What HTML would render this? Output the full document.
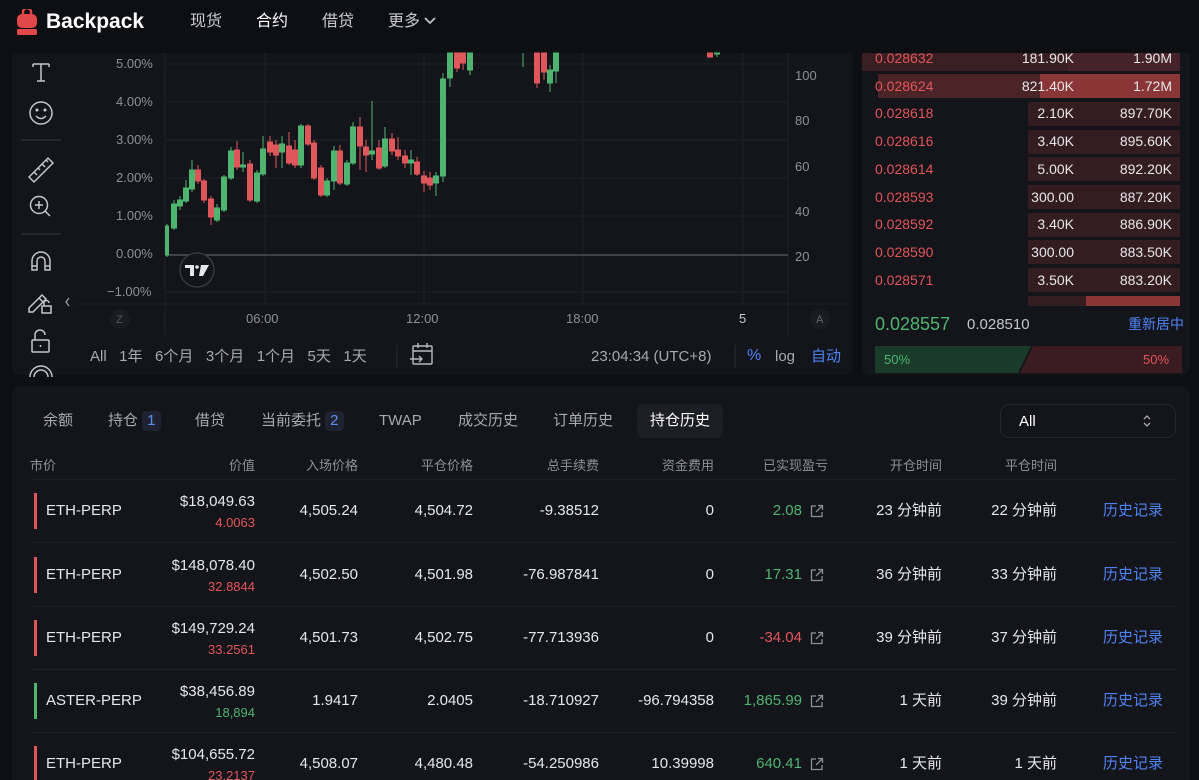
<!DOCTYPE html>
<html><head><meta charset="utf-8"><style>
*{margin:0;padding:0;box-sizing:border-box}
html,body{width:1199px;height:780px;overflow:hidden}
body{background:#0e0f13;position:relative;font-family:"Liberation Sans","Noto Sans CJK SC",sans-serif;color:#e6e7ea;line-height:1.2}
.a{position:absolute;white-space:nowrap}
.panel{position:absolute;background:#14151b;border-radius:8px}
.nav{font-size:16px;color:#c9cace;top:12px;line-height:20px}
.ax{font-size:13px;color:#8e9096;line-height:16px}
.tab{font-size:15px;color:#a7a9ae;top:411px;line-height:20px}
.th{font-size:13px;color:#8e9096;top:458px;text-align:right;line-height:16px}
.g{color:#4fb46f}.r{color:#e2555a}.b{color:#4f83f5}
.rowsep{position:absolute;left:32px;width:1144px;height:1px;background:#1e2027}
.row{position:absolute;left:0;width:1199px;height:20px}
.row div{position:absolute;top:0;line-height:20px;font-size:15px;white-space:nowrap;text-align:right}
.row .bar{left:34px;top:-8px;width:3px;height:36px}
.row .n{left:46px;text-align:left}
.row .v{left:135px;width:120px;top:-9px}
.row .s{left:135px;width:120px;top:12px;font-size:13px}
.row .c1{left:238px;width:120px}
.row .c2{left:353px;width:120px}
.row .c3{left:479px;width:120px}
.row .c4{left:594px;width:120px}
.row .c5{left:682px;width:120px}
.row .c6{left:822px;width:120px}
.row .c7{left:937px;width:120px}
.row .l{left:1103px;text-align:left;color:#4f83f5}
.row svg{position:absolute;left:810px;top:3px}
.obr{position:absolute;left:875px;width:297px;height:20px;font-size:14px;line-height:20px}
.obr span{position:absolute;top:0}
</style></head><body>
<svg class="a" style="left:16px;top:9px" width="22" height="27" viewBox="0 0 22 27"><path d="M7 5 V3 a4 4 0 0 1 8 0 V5" fill="none" stroke="#e2474a" stroke-width="2.4"/><rect x="1" y="5" width="20" height="14" rx="5" fill="#e2474a"/><rect x="1" y="20" width="20" height="6" rx="1.5" fill="#e2474a"/></svg>
<div class="a" style="left:46px;top:10px;font-size:21px;line-height:24px;font-weight:bold;color:#fff">Backpack</div>
<div class="a nav" style="left:190px">现货</div>
<div class="a nav" style="left:256px;color:#fff">合约</div>
<div class="a nav" style="left:322px">借贷</div>
<div class="a nav" style="left:388px">更多 <svg width="12" height="10" viewBox="0 0 12 10"><path d="M1 2 L6 7 L11 2" fill="none" stroke="#c9cace" stroke-width="1.6"/></svg></div>

<div class="panel" style="left:12px;top:53px;width:841px;height:322px;border-radius:0 0 8px 8px"></div>
<svg class="a" style="left:0;top:0" width="860" height="380">
<g stroke="#1f2128" stroke-width="1">
<line x1="165" y1="64" x2="788" y2="64"/><line x1="165" y1="102" x2="788" y2="102"/><line x1="165" y1="140" x2="788" y2="140"/><line x1="165" y1="178" x2="788" y2="178"/><line x1="165" y1="216" x2="788" y2="216"/><line x1="165" y1="292" x2="788" y2="292"/>
<line x1="165" y1="53" x2="165" y2="335"/><line x1="265" y1="53" x2="265" y2="304"/><line x1="424" y1="53" x2="424" y2="304"/><line x1="583" y1="53" x2="583" y2="304"/><line x1="743" y1="53" x2="743" y2="304"/><line x1="788" y1="53" x2="788" y2="335"/>
<line x1="75" y1="304" x2="852" y2="304"/>
</g>
<line x1="165" y1="255" x2="788" y2="255" stroke="#5a5c63" stroke-width="1.2"/>
<g fill="#4fb46f" stroke="#4fb46f">
<line x1="167" y1="224" x2="167" y2="257"/><rect x="165.5" y="226" width="3" height="29"/>
<line x1="174" y1="200" x2="174" y2="230"/><rect x="171.5" y="204" width="5" height="24"/>
<line x1="180" y1="196" x2="180" y2="210"/><rect x="177.5" y="200" width="5" height="6"/>
<line x1="186" y1="180" x2="186" y2="203"/><rect x="183.5" y="188" width="5" height="13"/>
<line x1="192" y1="160" x2="192" y2="192"/><rect x="189.5" y="170" width="5" height="19"/>
<line x1="217" y1="204" x2="217" y2="222"/><rect x="214.5" y="208" width="5" height="12"/>
<line x1="224" y1="175" x2="224" y2="212"/><rect x="221.5" y="177" width="5" height="33"/>
<line x1="231" y1="147" x2="231" y2="180"/><rect x="228.5" y="151" width="5" height="27"/>
<line x1="243" y1="152" x2="243" y2="172"/><rect x="240.5" y="165" width="5" height="2"/>
<line x1="257" y1="170" x2="257" y2="203"/><rect x="254.5" y="173" width="5" height="28"/>
<line x1="263" y1="136" x2="263" y2="176"/><rect x="260.5" y="149" width="5" height="25"/>
<line x1="282" y1="136" x2="282" y2="168"/><rect x="279.5" y="144" width="5" height="8"/>
<line x1="301" y1="124" x2="301" y2="168"/><rect x="298.5" y="126" width="5" height="39"/>
<line x1="327" y1="178" x2="327" y2="197"/><rect x="324.5" y="181" width="5" height="14"/>
<line x1="334" y1="146" x2="334" y2="190"/><rect x="331.5" y="151" width="5" height="30"/>
<line x1="347" y1="160" x2="347" y2="186"/><rect x="344.5" y="163" width="5" height="21"/>
<line x1="353" y1="122" x2="353" y2="165"/><rect x="350.5" y="127" width="5" height="36"/>
<line x1="372" y1="101" x2="372" y2="160"/><rect x="369.5" y="151" width="5" height="3"/>
<line x1="385" y1="127" x2="385" y2="168"/><rect x="382.5" y="139" width="5" height="27"/>
<line x1="411" y1="150" x2="411" y2="175"/><rect x="408.5" y="160" width="5" height="3"/>
<line x1="436" y1="172" x2="436" y2="196"/><rect x="433.5" y="176" width="5" height="7"/>
<line x1="443" y1="73" x2="443" y2="182"/><rect x="440.5" y="79" width="5" height="97"/>
<line x1="450" y1="53" x2="450" y2="87"/><rect x="447.5" y="53" width="5" height="25"/>
<line x1="470" y1="53" x2="470" y2="75"/><rect x="467.5" y="53" width="5" height="17"/>
<line x1="523" y1="53" x2="523" y2="67"/>
<line x1="550" y1="65" x2="550" y2="92"/><rect x="547.5" y="70" width="5" height="13"/>
<line x1="556" y1="53" x2="556" y2="83"/><rect x="553.5" y="53" width="5" height="18"/>
<line x1="717" y1="53" x2="717" y2="57"/><rect x="714.5" y="53" width="5" height="1"/>
</g>
<g fill="#e0575b" stroke="#e0575b">
<line x1="198" y1="165" x2="198" y2="184"/><rect x="195.5" y="170" width="5" height="11"/>
<line x1="204" y1="179" x2="204" y2="203"/><rect x="201.5" y="181" width="5" height="19"/>
<line x1="211" y1="196" x2="211" y2="225"/><rect x="208.5" y="199" width="5" height="18"/>
<line x1="237" y1="141" x2="237" y2="170"/><rect x="234.5" y="150" width="5" height="17"/>
<line x1="250" y1="160" x2="250" y2="202"/><rect x="247.5" y="164" width="5" height="36"/>
<line x1="270" y1="136" x2="270" y2="156"/><rect x="267.5" y="142" width="5" height="10"/>
<line x1="276" y1="140" x2="276" y2="168"/><rect x="273.5" y="145" width="5" height="10"/>
<line x1="289" y1="132" x2="289" y2="165"/><rect x="286.5" y="146" width="5" height="17"/>
<line x1="295" y1="140" x2="295" y2="168"/><rect x="292.5" y="150" width="5" height="15"/>
<line x1="308" y1="124" x2="308" y2="146"/><rect x="305.5" y="126" width="5" height="18"/>
<line x1="314" y1="140" x2="314" y2="180"/><rect x="311.5" y="143" width="5" height="35"/>
<line x1="321" y1="165" x2="321" y2="197"/><rect x="318.5" y="168" width="5" height="27"/>
<line x1="340" y1="145" x2="340" y2="185"/><rect x="337.5" y="151" width="5" height="32"/>
<line x1="360" y1="117" x2="360" y2="170"/><rect x="357.5" y="127" width="5" height="19"/>
<line x1="366" y1="140" x2="366" y2="172"/><rect x="363.5" y="147" width="5" height="8"/>
<line x1="379" y1="140" x2="379" y2="170"/><rect x="376.5" y="148" width="5" height="20"/>
<line x1="392" y1="133" x2="392" y2="155"/><rect x="389.5" y="139" width="5" height="12"/>
<line x1="398" y1="137" x2="398" y2="160"/><rect x="395.5" y="150" width="5" height="6"/>
<line x1="405" y1="150" x2="405" y2="168"/><rect x="402.5" y="156" width="5" height="7"/>
<line x1="417" y1="157" x2="417" y2="176"/><rect x="414.5" y="162" width="5" height="12"/>
<line x1="424" y1="171" x2="424" y2="192"/><rect x="421.5" y="176" width="5" height="7"/>
<line x1="430" y1="172" x2="430" y2="190"/><rect x="427.5" y="178" width="5" height="7"/>
<line x1="457" y1="53" x2="457" y2="72"/><rect x="454.5" y="53" width="5" height="15"/>
<line x1="463" y1="53" x2="463" y2="70"/><rect x="460.5" y="53" width="5" height="10"/>
<line x1="537" y1="53" x2="537" y2="88"/><rect x="534.5" y="53" width="5" height="30"/>
<line x1="544" y1="53" x2="544" y2="80"/><rect x="541.5" y="53" width="5" height="19"/>
<rect x="707.5" y="53" width="5" height="4"/>
</g>
<g fill="none" stroke="#c4c6cb" stroke-width="1.5">
<path d="M33 64 H49 M33 64 V67 M49 64 V67 M41 64 V81 M37 81 H45"/>
<circle cx="41" cy="113" r="11"/><circle cx="37" cy="110" r="0.8"/><circle cx="45" cy="110" r="0.8"/><path d="M36 116 Q41 121 46 116"/>
<path d="M29 177 L48 158 L53 163 L34 182 Z M34 172 l3 3 M38 168 l2 2 M42 164 l3 3 M46 160 l2 2"/>
<circle cx="39" cy="205" r="8.5"/><path d="M45 211 L50 216 M35 205 H43 M39 201 V209"/>
<path d="M32 270 V261 a9 9 0 0 1 18 0 V270 H45 V261 a4 4 0 0 0 -8 0 V270 Z M32 266 H37 M45 266 H50"/>
<path d="M29 308 L42 295 L46 299 L33 312 L29 312 Z M39 298 L43 302"/><rect x="42" y="306" width="9" height="7"/><path d="M44 306 v-3 a2.5 2.5 0 0 1 5 0"/>
<rect x="32" y="340" width="17" height="12" rx="1"/><path d="M35 340 v-5 a5 5 0 0 1 10 0"/><path d="M40.5 345 v2"/>
<path d="M30 377 a11 11 0 0 1 22 0 M34 377 a7 7 0 0 1 14 0"/>
</g>
<g stroke="#2a2c33" stroke-width="1.5"><line x1="21" y1="140" x2="61" y2="140"/><line x1="21" y1="234" x2="61" y2="234"/></g>
<path d="M69 298 L66 302 L69 306" fill="none" stroke="#9a9ca1" stroke-width="1.3"/>
<circle cx="197" cy="270" r="17" fill="#14151b" stroke="#3a3c43" stroke-width="1.3"/>
<path d="M185 265 H194 V276 H190 V268 H185 Z" fill="#e6e7ea"/><circle cx="197" cy="267" r="1.8" fill="#e6e7ea"/><path d="M201 265 H209 L203 276 H199 Z" fill="#e6e7ea"/>
<circle cx="120" cy="319" r="10" fill="#1b1c22"/><circle cx="820" cy="319" r="10" fill="#1b1c22"/>
<line x1="397" y1="345" x2="397" y2="368" stroke="#2a2c33"/><line x1="735" y1="345" x2="735" y2="368" stroke="#2a2c33"/>
<g fill="none" stroke="#b7b9be" stroke-width="1.4"><rect x="413" y="346" width="19" height="18" rx="1"/><path d="M413 351 H432 M418 343 V348 M427 343 V348 M410 359 H422 M419 356 L422 359 L419 362"/></g>
</svg>
<div class="a ax" style="left:116px;top:56px">5.00%</div>
<div class="a ax" style="left:116px;top:94px">4.00%</div>
<div class="a ax" style="left:116px;top:132px">3.00%</div>
<div class="a ax" style="left:116px;top:170px">2.00%</div>
<div class="a ax" style="left:116px;top:208px">1.00%</div>
<div class="a ax" style="left:116px;top:246px">0.00%</div>
<div class="a ax" style="left:107px;top:284px">−1.00%</div>
<div class="a ax" style="left:795px;top:68px">100</div>
<div class="a ax" style="left:795px;top:113px">80</div>
<div class="a ax" style="left:795px;top:159px">60</div>
<div class="a ax" style="left:795px;top:204px">40</div>
<div class="a ax" style="left:795px;top:249px">20</div>
<div class="a ax" style="left:246px;top:311px">06:00</div>
<div class="a ax" style="left:406px;top:311px">12:00</div>
<div class="a ax" style="left:566px;top:311px">18:00</div>
<div class="a ax" style="left:739px;top:311px;color:#ccc">5</div>
<div class="a ax" style="left:116px;top:312px;font-size:11px;color:#555">Z</div>
<div class="a ax" style="left:816px;top:312px;font-size:11px;color:#666">A</div>
<div class="a" style="left:90px;top:347px;font-size:15px;line-height:20px;color:#a7a9ae">All&nbsp;&nbsp;&nbsp;1年&nbsp;&nbsp;&nbsp;6个月&nbsp;&nbsp;&nbsp;3个月&nbsp;&nbsp;&nbsp;1个月&nbsp;&nbsp;&nbsp;5天&nbsp;&nbsp;&nbsp;1天</div>
<div class="a" style="left:591px;top:347px;font-size:15px;line-height:20px;color:#a7a9ae">23:04:34 (UTC+8)</div>
<div class="a b" style="left:747px;top:346px;font-size:16px;line-height:20px">%</div>
<div class="a" style="left:775px;top:347px;font-size:15px;line-height:20px;color:#a7a9ae">log</div>
<div class="a b" style="left:811px;top:347px;font-size:15px;line-height:20px">自动</div>

<div class="panel" style="left:862px;top:53px;width:328px;height:322px;border-radius:0 0 8px 8px"></div>
<div style="position:absolute;left:862px;top:53px;width:328px;height:253px;overflow:hidden">
<div style="position:absolute;left:0;top:-6px;width:318px;height:24px;background:#3a1f22"></div><div style="position:absolute;left:206px;top:-6px;width:112px;height:24px;background:#46232a"></div>
<div style="position:absolute;left:16px;top:21px;width:302px;height:24px;background:#4a2427"></div><div style="position:absolute;left:178px;top:21px;width:140px;height:24px;background:#8a3536"></div>
<div style="position:absolute;left:166px;top:49px;width:152px;height:24px;background:#341d21"></div>
<div style="position:absolute;left:166px;top:77px;width:152px;height:24px;background:#341d21"></div>
<div style="position:absolute;left:166px;top:104px;width:152px;height:24px;background:#341d21"></div>
<div style="position:absolute;left:166px;top:132px;width:152px;height:24px;background:#341d21"></div>
<div style="position:absolute;left:166px;top:160px;width:152px;height:24px;background:#341d21"></div>
<div style="position:absolute;left:166px;top:187px;width:152px;height:24px;background:#341d21"></div>
<div style="position:absolute;left:166px;top:215px;width:152px;height:24px;background:#341d21"></div>
<div style="position:absolute;left:166px;top:243px;width:152px;height:24px;background:#341d21"></div><div style="position:absolute;left:224px;top:243px;width:94px;height:24px;background:#8a3536"></div>
</div>
<div class="obr" style="top:48px"><span class="r" style="left:0">0.028632</span><span style="right:98px">181.90K</span><span style="right:0">1.90M</span></div>
<div class="obr" style="top:76px"><span class="r" style="left:0">0.028624</span><span style="right:98px">821.40K</span><span style="right:0">1.72M</span></div>
<div class="obr" style="top:103px"><span class="r" style="left:0">0.028618</span><span style="right:98px">2.10K</span><span style="right:0">897.70K</span></div>
<div class="obr" style="top:131px"><span class="r" style="left:0">0.028616</span><span style="right:98px">3.40K</span><span style="right:0">895.60K</span></div>
<div class="obr" style="top:159px"><span class="r" style="left:0">0.028614</span><span style="right:98px">5.00K</span><span style="right:0">892.20K</span></div>
<div class="obr" style="top:187px"><span class="r" style="left:0">0.028593</span><span style="right:98px">300.00</span><span style="right:0">887.20K</span></div>
<div class="obr" style="top:214px"><span class="r" style="left:0">0.028592</span><span style="right:98px">3.40K</span><span style="right:0">886.90K</span></div>
<div class="obr" style="top:242px"><span class="r" style="left:0">0.028590</span><span style="right:98px">300.00</span><span style="right:0">883.50K</span></div>
<div class="obr" style="top:270px"><span class="r" style="left:0">0.028571</span><span style="right:98px">3.50K</span><span style="right:0">883.20K</span></div>
<div class="a g" style="left:875px;top:313px;font-size:18px;line-height:22px">0.028557</div>
<div class="a" style="left:967px;top:315px;font-size:15px;line-height:20px;color:#c4c6cb">0.028510</div>
<div class="a b" style="left:1128px;top:315px;font-size:14px;line-height:18px">重新居中</div>
<svg class="a" style="left:875px;top:346px" width="307" height="27"><path d="M0 0 H156 L143 27 H0 Z" fill="#1a3a2a"/><path d="M158 0 H307 V27 H145 Z" fill="#3b1c20"/></svg>
<div class="a g" style="left:884px;top:352px;font-size:13px;line-height:16px">50%</div>
<div class="a r" style="left:1143px;top:352px;font-size:13px;line-height:16px">50%</div>

<div class="panel" style="left:12px;top:386px;width:1178px;height:400px"></div>
<div class="a tab" style="left:43px">余额</div>
<div class="a tab" style="left:108px">持仓 <span style="display:inline-block;background:#1f2230;color:#5d8ef5;padding:0 5px;border-radius:4px">1</span></div>
<div class="a tab" style="left:195px">借贷</div>
<div class="a tab" style="left:261px">当前委托 <span style="display:inline-block;background:#1f2230;color:#5d8ef5;padding:0 5px;border-radius:4px">2</span></div>
<div class="a tab" style="left:379px">TWAP</div>
<div class="a tab" style="left:458px">成交历史</div>
<div class="a tab" style="left:553px">订单历史</div>
<div class="a" style="left:637px;top:404px;width:86px;height:34px;background:#1d1e25;border-radius:7px"></div>
<div class="a tab" style="left:650px;color:#fff">持仓历史</div>
<div class="a" style="left:1000px;top:404px;width:176px;height:34px;border:1.5px solid #24262d;border-radius:9px"></div>
<div class="a" style="left:1019px;top:412px;font-size:15px;line-height:20px;color:#fff">All</div>
<svg class="a" style="left:1142px;top:413px" width="10" height="16"><path d="M2 6 L5 3 L8 6 M2 10 L5 13 L8 10" fill="none" stroke="#aaa" stroke-width="1.3"/></svg>

<div class="a th" style="left:30px;text-align:left">市价</div>
<div class="a th" style="left:155px;width:100px">价值</div>
<div class="a th" style="left:258px;width:100px">入场价格</div>
<div class="a th" style="left:373px;width:100px">平仓价格</div>
<div class="a th" style="left:499px;width:100px">总手续费</div>
<div class="a th" style="left:614px;width:100px">资金费用</div>
<div class="a th" style="left:728px;width:100px">已实现盈亏</div>
<div class="a th" style="left:842px;width:100px">开仓时间</div>
<div class="a th" style="left:957px;width:100px">平仓时间</div>
<div class="rowsep" style="top:479px"></div>
<div class="rowsep" style="top:542px"></div>
<div class="rowsep" style="top:606px"></div>
<div class="rowsep" style="top:669px"></div>
<div class="rowsep" style="top:732px"></div>

<div class="row" style="top:501px"><div class="bar" style="background:#e2555a"></div><div class="n">ETH-PERP</div><div class="v">$18,049.63</div><div class="s r">4.0063</div><div class="c1">4,505.24</div><div class="c2">4,504.72</div><div class="c3">-9.38512</div><div class="c4">0</div><div class="c5 g">2.08</div><svg width="14" height="14"><path d="M6 2 H1.5 V12.5 H12 V8 M8 1.5 H12.5 V6 M12.5 1.5 L6 8" fill="none" stroke="#8e9096" stroke-width="1.3"/></svg><div class="c6">23 分钟前</div><div class="c7">22 分钟前</div><div class="l">历史记录</div></div>
<div class="row" style="top:565px"><div class="bar" style="background:#e2555a"></div><div class="n">ETH-PERP</div><div class="v">$148,078.40</div><div class="s r">32.8844</div><div class="c1">4,502.50</div><div class="c2">4,501.98</div><div class="c3">-76.987841</div><div class="c4">0</div><div class="c5 g">17.31</div><svg width="14" height="14"><path d="M6 2 H1.5 V12.5 H12 V8 M8 1.5 H12.5 V6 M12.5 1.5 L6 8" fill="none" stroke="#8e9096" stroke-width="1.3"/></svg><div class="c6">36 分钟前</div><div class="c7">33 分钟前</div><div class="l">历史记录</div></div>
<div class="row" style="top:628px"><div class="bar" style="background:#e2555a"></div><div class="n">ETH-PERP</div><div class="v">$149,729.24</div><div class="s r">33.2561</div><div class="c1">4,501.73</div><div class="c2">4,502.75</div><div class="c3">-77.713936</div><div class="c4">0</div><div class="c5 r">-34.04</div><svg width="14" height="14"><path d="M6 2 H1.5 V12.5 H12 V8 M8 1.5 H12.5 V6 M12.5 1.5 L6 8" fill="none" stroke="#8e9096" stroke-width="1.3"/></svg><div class="c6">39 分钟前</div><div class="c7">37 分钟前</div><div class="l">历史记录</div></div>
<div class="row" style="top:691px"><div class="bar" style="background:#4fb46f"></div><div class="n">ASTER-PERP</div><div class="v">$38,456.89</div><div class="s g">18,894</div><div class="c1">1.9417</div><div class="c2">2.0405</div><div class="c3">-18.710927</div><div class="c4">-96.794358</div><div class="c5 g">1,865.99</div><svg width="14" height="14"><path d="M6 2 H1.5 V12.5 H12 V8 M8 1.5 H12.5 V6 M12.5 1.5 L6 8" fill="none" stroke="#8e9096" stroke-width="1.3"/></svg><div class="c6">1 天前</div><div class="c7">39 分钟前</div><div class="l">历史记录</div></div>
<div class="row" style="top:754px"><div class="bar" style="background:#e2555a"></div><div class="n">ETH-PERP</div><div class="v">$104,655.72</div><div class="s r">23.2137</div><div class="c1">4,508.07</div><div class="c2">4,480.48</div><div class="c3">-54.250986</div><div class="c4">10.39998</div><div class="c5 g">640.41</div><svg width="14" height="14"><path d="M6 2 H1.5 V12.5 H12 V8 M8 1.5 H12.5 V6 M12.5 1.5 L6 8" fill="none" stroke="#8e9096" stroke-width="1.3"/></svg><div class="c6">1 天前</div><div class="c7">1 天前</div><div class="l">历史记录</div></div>
</body></html>
